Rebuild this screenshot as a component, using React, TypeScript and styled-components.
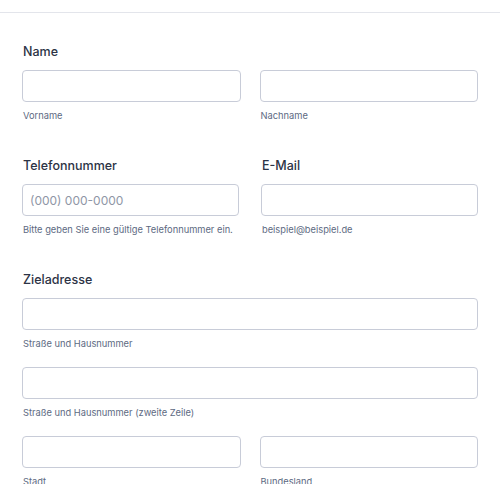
import React from "react";
import styled, { createGlobalStyle } from "styled-components";

const Global = createGlobalStyle`
  html, body { margin: 0; padding: 0; background: #ffffff; }
  body { font-family: Inter, "Noto Sans", sans-serif; -webkit-font-smoothing: antialiased; }
  * { box-sizing: border-box; }
`;

const Page = styled.div`
  padding-top: 12px;
  width: 500px;
`;

const Form = styled.form`
  border-top: 1px solid #e3e5eb;
  padding: 29px 22px 0 22px;
  display: flex;
  flex-direction: column;
  gap: 33px;
`;

const Row = styled.div<{ $gap: number }>`
  display: grid;
  grid-template-columns: 1fr 1fr;
  column-gap: ${(p) => p.$gap}px;
`;

const Field = styled.div`
  display: flex;
  flex-direction: column;
`;

const Label = styled.label`
  display: block;
  font-size: 12.5px;
  line-height: 20px;
  font-weight: 500;
  color: #2c3345;
  margin-bottom: 8px;
  padding-left: 1px;
  height: 20px;
`;

const Stack = styled.div`
  display: flex;
  flex-direction: column;
  gap: 16px;
`;

const Input = styled.input`
  display: block;
  width: 100%;
  height: 32px;
  border: 1px solid #c8ccd8;
  border-radius: 4px;
  background: #ffffff;
  padding: 0 7px;
  font-family: Inter, "Noto Sans", sans-serif;
  font-size: 12px;
  color: #2c3345;
  outline: none;
  &::placeholder { color: #8f96a6; }
`;

const Sub = styled.span`
  display: block;
  margin-top: 7px;
  padding-left: 1px;
  font-size: 9.3px;
  line-height: 14px;
  color: #5d6a82;
`;

const Sublabeled = ({ sub, placeholder }: { sub: string; placeholder?: string }) => (
  <Field>
    <Input placeholder={placeholder} />
    <Sub>{sub}</Sub>
  </Field>
);

export default function App() {
  return (
    <Page>
      <Global />
      <Form>
        <Field>
          <Label>Name</Label>
          <Row $gap={19}>
            <Sublabeled sub="Vorname" />
            <Sublabeled sub="Nachname" />
          </Row>
        </Field>

        <Row $gap={22}>
          <Field>
            <Label>Telefonnummer</Label>
            <Sublabeled
              placeholder="(000) 000-0000"
              sub="Bitte geben Sie eine gültige Telefonnummer ein."
            />
          </Field>
          <Field>
            <Label>E-Mail</Label>
            <Sublabeled sub="beispiel@beispiel.de" />
          </Field>
        </Row>

        <Field>
          <Label>Zieladresse</Label>
          <Stack>
            <Sublabeled sub="Straße und Hausnummer" />
            <Sublabeled sub="Straße und Hausnummer (zweite Zeile)" />
            <Row $gap={19}>
              <Sublabeled sub="Stadt" />
              <Sublabeled sub="Bundesland" />
            </Row>
          </Stack>
        </Field>
      </Form>
    </Page>
  );
}
